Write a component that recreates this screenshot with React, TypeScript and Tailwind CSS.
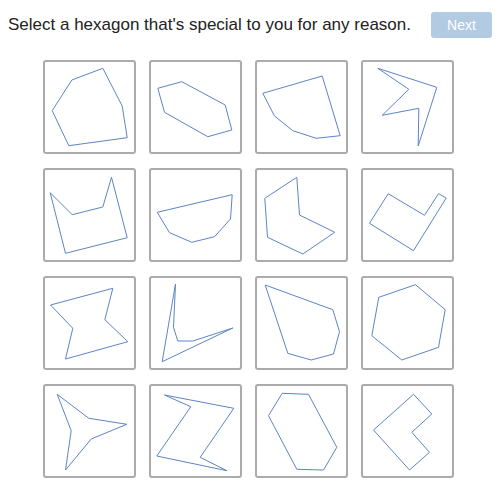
import React from "react";

// hexagon outlines, coordinates inside each box's inner area (89x90)
const shapes: number[][][] = [
  [[26.8, 18], [57.8, 6.3], [77.2, 44], [82.2, 75.7], [23.8, 83.7], [7.2, 48.7]],
  [[6.8, 26.3], [30.8, 19.7], [74.2, 43], [80.8, 68], [56.8, 74.7], [13.5, 50.3]],
  [[5.8, 31.3], [65.2, 14], [83.2, 73.7], [59.2, 76.3], [35.8, 68.7], [17.5, 54]],
  [[14.8, 6.3], [73.8, 25.3], [55.2, 84], [55.8, 46.3], [19.2, 53.3], [45.8, 27.3]],
  [[5.2, 22.7], [27.2, 44.7], [57.8, 37], [66.5, 7.3], [82.2, 67.7], [20.5, 83.3]],
  [[6.2, 42.3], [81.2, 24.7], [79.5, 49], [63.5, 66.7], [40.8, 72.3], [18.5, 62.7]],
  [[7.8, 28.3], [39.8, 7.3], [42.5, 45], [77.8, 62.3], [45.8, 84], [10.5, 67.3]],
  [[6.5, 53.3], [25.2, 23.7], [61.5, 45.3], [75.5, 23.7], [83.2, 28], [50.5, 80.7]],
  [[5.5, 27], [67.8, 10.3], [59.8, 41.7], [82.8, 63.7], [20.5, 81], [27.8, 50.3]],
  [[24.5, 6], [22.5, 49.3], [26.8, 63], [41.8, 63], [81.8, 50], [11.2, 83.7]],
  [[8.2, 7], [75.8, 31.7], [82.5, 53.7], [76.5, 76], [54.2, 82], [30.8, 75.3]],
  [[15.8, 19.3], [52.5, 6.7], [82.2, 31.7], [75.5, 69.3], [38.8, 82], [8.8, 57.7]],
  [[12.2, 8.3], [43.8, 32.3], [81.8, 38.3], [46.2, 53], [20.5, 84], [26.2, 44.7]],
  [[13.5, 9], [82.8, 22.3], [49.2, 71.3], [75.8, 84.7], [5.8, 70], [39.8, 20.7]],
  [[25.2, 7.3], [51.5, 8.3], [79.8, 61.3], [66.5, 84], [39.8, 83.3], [11.5, 29.7]],
  [[50.5, 8.3], [68.8, 28], [48.8, 46.3], [66.5, 66.3], [46.5, 84], [10.5, 44]],
];

export default function App() {
  return (
    <div className="w-[500px] h-[489px] bg-white font-['Liberation_Sans',Arial,sans-serif]">
      <div className="flex items-center pt-[12px] h-[38px]">
        <p className="ml-[8px] text-[17px] text-[#222]">
          Select a hexagon that's special to you for any reason.
        </p>
        <button
          disabled
          className="ml-auto mr-[8px] w-[61px] h-[26px] rounded-[3px] bg-[#b3cae3] text-white text-[14px]"
        >
          Next
        </button>
      </div>

      <div className="mt-[22px] ml-[43px] grid grid-cols-[repeat(4,93px)] auto-rows-[94px] gap-x-[13px] gap-y-[14px]">
        {shapes.map((pts, i) => (
          <div key={i} className="border-2 border-[#ababab] rounded-[3px] bg-white">
            <svg width="89" height="90" viewBox="0 0 89 90" className="block">
              <polygon
                points={pts.map((p) => p.join(",")).join(" ")}
                fill="none"
                stroke="#5d84c6"
                strokeWidth="1"
                strokeLinejoin="round"
              />
            </svg>
          </div>
        ))}
      </div>
    </div>
  );
}
